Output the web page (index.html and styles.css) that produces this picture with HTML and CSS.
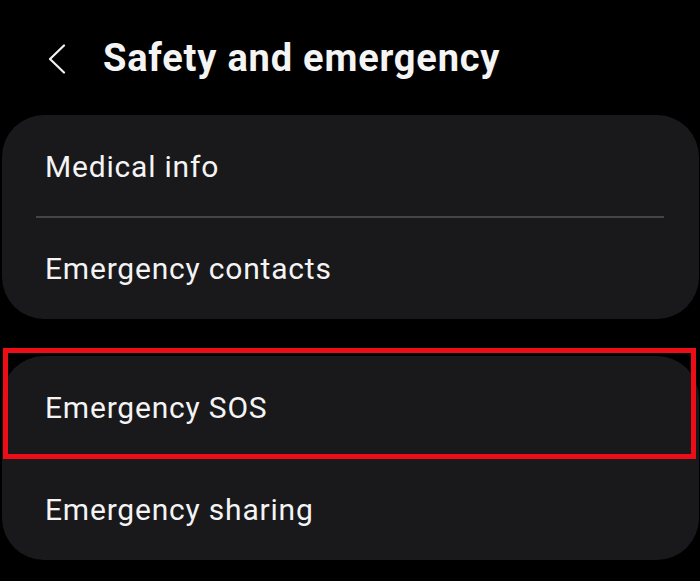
FILE: index.html
```html
<!DOCTYPE html>
<html>
<head>
<meta charset="utf-8">
<link rel="stylesheet" href="styles.css">
</head>
<body>
<div class="screen">
  <header class="topbar">
    <span class="back">
      <svg width="20" height="30" viewBox="0 0 20 30"><path d="M17 1.5 L3 15 L17 28.5" fill="none" stroke="#f2f2f2" stroke-width="2.2" stroke-linecap="round" stroke-linejoin="round"/></svg>
    </span>
    <h1 class="title">Safety and emergency</h1>
  </header>
  <section class="card">
    <div class="row">Medical info</div>
    <div class="divider"></div>
    <div class="row">Emergency contacts</div>
  </section>
  <section class="card card-second">
    <div class="row">Emergency SOS</div>
    <div class="divider"></div>
    <div class="row">Emergency sharing</div>
    <div class="highlight"></div>
  </section>
</div>
</body>
</html>
```
FILE: styles.css
```css
html, body {
  margin: 0;
  padding: 0;
  background: #000;
}
.screen {
  width: 700px;
  height: 581px;
  background: #000;
  font-family: Roboto, "Noto Sans", sans-serif;
  color: #f4f4f4;
  overflow: hidden;
}
.topbar {
  display: flex;
  align-items: center;
  height: 115px;
  box-sizing: border-box;
  padding: 0 0 0 47px;
}
.back {
  display: flex;
  width: 20px;
  height: 30px;
  margin-right: 36px;
  margin-top: 3px;
}
.title {
  margin: 0;
  font-size: 38px;
  font-weight: 700;
  letter-spacing: 0.8px;
  color: #f4f4f4;
}
.card {
  margin: 0 1px 0 2px;
  background: #19191b;
  border-radius: 42px;
  display: flex;
  flex-direction: column;
  position: relative;
}
.card-second {
  margin-top: 37px;
}
.row {
  height: 102px;
  display: flex;
  align-items: center;
  padding-left: 43px;
  font-size: 30px;
  font-weight: 400;
  letter-spacing: 0.8px;
}
.divider {
  height: 2px;
  margin: -1px 35px -1px 34px;
  background: #444447;
}
.highlight {
  position: absolute;
  left: 1px;
  top: -8px;
  width: 683px;
  height: 101px;
  border: 5px solid #ec0d16;
}
```
